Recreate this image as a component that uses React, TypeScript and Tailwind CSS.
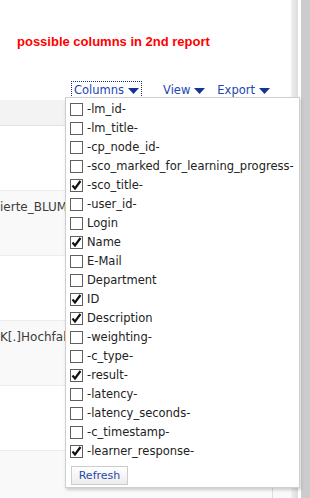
import { Fragment } from 'react'

const columns = [
  { label: '-lm_id-', checked: false },
  { label: '-lm_title-', checked: false },
  { label: '-cp_node_id-', checked: false },
  { label: '-sco_marked_for_learning_progress-', checked: false },
  { label: '-sco_title-', checked: true },
  { label: '-user_id-', checked: false },
  { label: 'Login', checked: false },
  { label: 'Name', checked: true },
  { label: 'E-Mail', checked: false },
  { label: 'Department', checked: false },
  { label: 'ID', checked: true },
  { label: 'Description', checked: true },
  { label: '-weighting-', checked: false },
  { label: '-c_type-', checked: false },
  { label: '-result-', checked: true },
  { label: '-latency-', checked: false },
  { label: '-latency_seconds-', checked: false },
  { label: '-c_timestamp-', checked: false },
  { label: '-learner_response-', checked: true },
]

const rows = [
  { text: '', shaded: false },
  { text: 'ierte_BLUMEN', shaded: true },
  { text: '', shaded: false },
  { text: 'K[.]Hochfahren', shaded: true },
  { text: '', shaded: false },
]

function Caret() {
  return (
    <svg width="11" height="6" viewBox="0 0 11 6" className="ml-[4px] mt-[2px]">
      <path d="M0 0h11L5.5 6z" fill="#16348f" />
    </svg>
  )
}

function CheckBox({ checked }: { checked: boolean }) {
  return (
    <span className="w-[13px] h-[13px] border border-[#5f5f5f] bg-white flex items-center justify-center shrink-0">
      {checked && (
        <svg width="11" height="11" viewBox="0 0 11 11">
          <path d="M1.5 5.5l2.5 3 5.5-7.5" fill="none" stroke="#111" strokeWidth="2.2" />
        </svg>
      )}
    </span>
  )
}

export default function App() {
  return (
    <div className="relative w-[310px] h-[498px] overflow-hidden bg-white flex" style={{ fontFamily: '"DejaVu Sans", Verdana, sans-serif' }}>
      {/* page area */}
      <div className="w-[291px] flex flex-col">
        <div className="h-[81px] pt-[34px] pl-[17px]">
          <p className="text-[13px] leading-[15px] font-bold text-[#ff0000]" style={{ fontFamily: '"Liberation Sans", Arial, sans-serif' }}>
            possible columns in 2nd report
          </p>
        </div>

        {/* toolbar */}
        <div className="h-[19px] flex items-start text-[11.5px] leading-[14px] text-[#2146b4]">
          <div className="ml-[71px] h-[17px] px-[2px] border border-dotted border-[#1a2f7a] flex items-center">
            Columns
            <Caret />
          </div>
          <div className="ml-[21px] h-[17px] flex items-center">
            View
            <Caret />
          </div>
          <div className="ml-[12px] h-[17px] flex items-center">
            Export
            <Caret />
          </div>
        </div>

        {/* table behind the menu */}
        <div className="h-[26px] bg-[#f3f3f3] border-b border-[#e0e0e0]" />
        {rows.map((r, i) => (
          <div
            key={i}
            className={`h-[65px] border-b border-[#ececec] pt-[9px] text-[12px] leading-[14px] text-[#3c3c3c] whitespace-nowrap ${r.shaded ? 'bg-[#f9f9f9]' : 'bg-white'}`}
          >
            {r.text}
          </div>
        ))}
        <div className="flex-1 bg-[#f9f9f9] flex">
          <div className="w-[272px]" />
          <div className="w-px bg-[#dedede]" />
        </div>
      </div>

      {/* side strips */}
      <div className="w-[7px] bg-gradient-to-r from-[#f0f0f0] to-[#dcdcdc]" />
      <div className="w-[3px] bg-white" />
      <div className="flex-1 bg-[#cccccc]" />

      {/* columns menu */}
      <div className="absolute left-[65px] top-[97px] w-[235px] h-[391px] bg-white border border-[#cfcfcf] shadow-[1px_2px_3px_rgba(0,0,0,0.18)] pt-[2px] pl-[4px]">
        {columns.map((c) => (
          <Fragment key={c.label}>
            <div className="h-[19px] flex items-center gap-[4px] text-[11.5px] text-[#222] whitespace-nowrap">
              <CheckBox checked={c.checked} />
              <span>{c.label}</span>
            </div>
          </Fragment>
        ))}
        <button className="mt-[5px] ml-[1px] w-[57px] h-[19px] border border-[#cccccc] bg-gradient-to-b from-white to-[#ececec] text-[11px] leading-[17px] text-[#2a4aa8]">
          Refresh
        </button>
      </div>
    </div>
  )
}
